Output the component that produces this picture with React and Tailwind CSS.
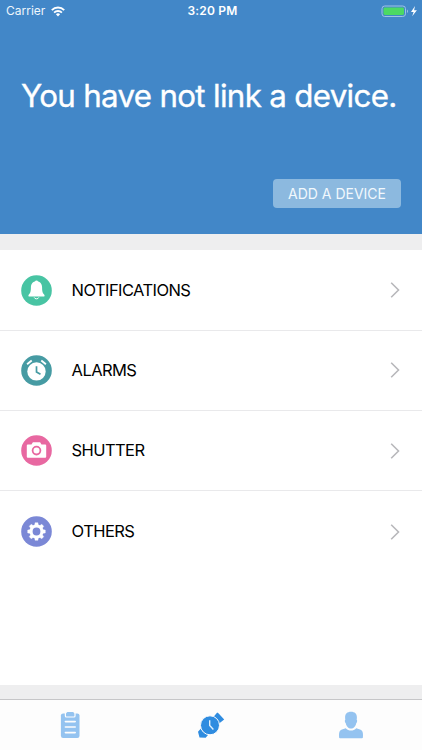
function BellIcon() {
  return (
    <svg viewBox="0 0 31 31" className="h-[31px] w-[31px]">
      <circle cx="15.5" cy="15.5" r="15.3" fill="#48c4a3" />
      <circle cx="15.5" cy="6.9" r="1.4" fill="#fff" />
      <path d="M15.5 6.3c-3.6 0-5.6 2.7-5.6 6.2 0 4.1-.5 5.4-2.2 7.2-.6.8-.3 1.9.7 1.9h14.2c1 0 1.3-1.1.7-1.9-1.7-1.8-2.2-3.1-2.2-7.2 0-3.5-2-6.2-5.6-6.2Z" fill="#fff" />
      <path d="M13.2 22.4a2.4 2 0 0 0 4.6 0" fill="none" stroke="#fff" strokeWidth="1" />
    </svg>
  );
}

function AlarmIcon() {
  return (
    <svg viewBox="0 0 31 31" className="h-[31px] w-[31px]">
      <circle cx="15.5" cy="15.5" r="15.3" fill="#469ba3" />
      <circle cx="15.5" cy="16.4" r="9.2" fill="#fff" />
      <path d="M6.1 9.2 10.7 5.4M20.3 5.4 24.9 9.2" stroke="#fff" strokeWidth="1.9" fill="none" />
      <path d="M15.5 11.2v5.8l4 2.2" stroke="#469ba3" strokeWidth="1.7" fill="none" />
    </svg>
  );
}

function CameraIcon() {
  return (
    <svg viewBox="0 0 31 31" className="h-[31px] w-[31px]">
      <circle cx="15.5" cy="15.5" r="15.3" fill="#e868a1" />
      <path d="M6.8 9.4h3.7l1.4-2.2h7.2l1.4 2.2h3.7a1 1 0 0 1 1 1v11.4a1 1 0 0 1-1 1H6.8a1 1 0 0 1-1-1V10.4a1 1 0 0 1 1-1Z" fill="#fff" />
      <circle cx="15.5" cy="15.6" r="3.9" fill="none" stroke="#e868a1" strokeWidth="1.8" />
    </svg>
  );
}

const teeth = [0, 45, 90, 135, 180, 225, 270, 315];

function GearIcon() {
  return (
    <svg viewBox="0 0 31 31" className="h-[31px] w-[31px]">
      <circle cx="15.5" cy="15.5" r="15.3" fill="#7b88d6" />
      {teeth.map((a) => (
        <path key={a} d="M13.5 10 14.1 6.7h2.8l.6 3.3Z" fill="#fff" stroke="#fff" strokeWidth=".4" strokeLinejoin="round" transform={`rotate(${a} 15.5 15.5)`} />
      ))}
      <circle cx="15.5" cy="15.5" r="5.4" fill="none" stroke="#fff" strokeWidth="3" />
    </svg>
  );
}

const rows = [
  { label: "NOTIFICATIONS", Icon: BellIcon },
  { label: "ALARMS", Icon: AlarmIcon },
  { label: "SHUTTER", Icon: CameraIcon },
  { label: "OTHERS", Icon: GearIcon },
];

function StatusBar() {
  return (
    <div className="grid h-[22px] grid-cols-3 items-center text-white">
      <div className="flex items-center pl-[6px]">
        <span className="text-[12px] leading-[22px] tracking-[0px] text-[#eef6fc]">Carrier</span>
        <svg viewBox="0 0 14 11" className="ml-[6px] h-[11px] w-[14px]" fill="none" stroke="#fff">
          <path d="M.8 4.1a8.8 8.8 0 0 1 12.4 0" strokeWidth="1.9" />
          <path d="M3.1 6.6a5.5 5.5 0 0 1 7.8 0" strokeWidth="1.8" />
          <path d="M7 10.4 4.9 8.3a3 3 0 0 1 4.2 0Z" fill="#fff" stroke="none" />
        </svg>
      </div>
      <span className="pl-[3px] text-center text-[12px] font-semibold leading-[22px] tracking-[0.2px] whitespace-nowrap">3:20 PM</span>
      <div className="flex items-center justify-end pr-[4px]">
        <svg viewBox="0 0 37 13" className="h-[13px] w-[37px]">
          <rect x="1" y="1" width="23.5" height="10.5" rx="2.7" fill="none" stroke="#9fc3e5" />
          <rect x="2.5" y="2.5" width="20.5" height="7.5" rx="1.4" fill="#4cd964" />
          <path d="M26 4.5V8c1.3-.6 1.3-2.9 0-3.5Z" fill="#9fc3e5" />
          <path d="M34 1 30 6.9h2.6l-1.4 4.4 4.7-6H33.1Z" fill="#fff" />
        </svg>
      </div>
    </div>
  );
}

function TabBar() {
  return (
    <nav className="grid h-[51px] shrink-0 grid-cols-3 border-t border-[#c6c6c8] bg-[#fdfdfd]">
      <div className="flex justify-center pt-[11px]">
        <svg viewBox="0 0 20 28" className="h-[28px] w-[20px]">
          <rect x=".9" y="2.4" width="18.6" height="24.6" rx="2.2" fill="#94c3f0" />
          <rect x="5.4" y="1.4" width="9.6" height="4.6" rx="1" fill="#94c3f0" stroke="#fdfdfd" strokeWidth="1.2" />
          <path d="M6.6 2V1.8Q6.6.9 7.6.9h5.2q1 0 1 .9V2Z" fill="#94c3f0" />
          <path d="M5.4 10.6h9.8M5.4 16h9.8M5.4 21.6h9.8" stroke="#fdfdfd" strokeWidth="1.6" strokeLinecap="round" />
        </svg>
      </div>
      <div className="flex justify-center pt-[11px]">
        <svg viewBox="0 0 28 28" className="h-[28px] w-[28px]">
          <path d="m16 6.5 4.2-5 1.2.8 5.8 6.2-4.8 3.8ZM4.8 16.5 1 20.8l1.5 5.6 6.2.3 3.1-3.8Z" fill="#2f8ce0" />
          <circle cx="13" cy="14.3" r="9.5" fill="#2f8ce0" stroke="#fdfdfd" strokeWidth="1" />
          <path d="M12.7 9.2v5.4l3.7 4" fill="none" stroke="#e2f1fd" strokeWidth="1.4" />
        </svg>
      </div>
      <div className="flex justify-center pt-[11px] pr-[1px]">
        <svg viewBox="0 0 26 28" className="h-[28px] w-[26px]" fill="#94c3f0">
          <path d="M1.1 26.6q-.5-5.4 1.2-7.1c1.2-1.1 3.5-1.6 5.4-2.3 2.8 3.2 7.8 3.2 10.6 0 1.9.7 4.2 1.2 5.4 2.3q1.7 1.7 1.2 7.1-.1.7-.9.7H2q-.8 0-.9-.7Z" />
          <path d="M13 .8C9.1.8 7.1 2.9 7.1 6.2c0 1.2.1 1.8.2 2.5-.8.1-.5 2.9.4 3.3.6 3.3 2.8 5.6 5.3 5.6s4.7-2.3 5.3-5.6c.9-.4 1.2-3.2.4-3.3.1-.7.2-1.3.2-2.5C18.9 2.9 16.9.8 13 .8Z" />
        </svg>
      </div>
    </nav>
  );
}

export default function App() {
  return (
    <div className="flex h-[750px] w-[422px] flex-col overflow-hidden bg-[#eeeeef] font-[Inter,'Liberation_Sans',sans-serif]">
      <header className="flex h-[234px] shrink-0 flex-col bg-[#4287c8]">
        <StatusBar />
        <h1 className="mt-[54px] pl-[21px] text-[31.3px] leading-[40px] tracking-[-0.68px] whitespace-nowrap text-white [-webkit-text-stroke:0.35px_white]">
          You have not link a device.
        </h1>
        <button className="mt-[63px] mr-[21px] flex h-[29px] w-[128px] items-center justify-center self-end rounded-[4px] bg-[#8cb9df] text-[14px] tracking-[0px] whitespace-nowrap text-[#f1f8fd]">
          ADD A DEVICE
        </button>
      </header>
      <main className="mt-[15.5px] h-[435px] shrink-0 bg-white pt-[1px]">
        {rows.map(({ label, Icon }, i) => (
          <div
            key={label}
            className={`flex h-[80.3px] items-center pr-[21px] pl-[20.6px] ${i < 3 ? "border-b border-[#e9e9eb]" : ""}`}
          >
            <Icon />
            <span className="ml-[20px] flex-1 text-[16.5px] tracking-[-0.58px] text-black">{label}</span>
            <svg viewBox="0 0 12 18" className="h-[18px] w-[12px]">
              <path d="m2.2 1.7 7.3 7.3-7.3 7.3" fill="none" stroke="#b8b8bb" strokeWidth="1.6" />
            </svg>
          </div>
        ))}
      </main>
      <div className="h-[14.5px] shrink-0" />
      <TabBar />
    </div>
  );
}
